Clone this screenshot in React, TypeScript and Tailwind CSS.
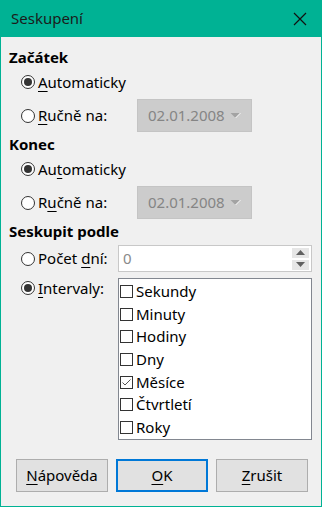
import React from "react";

const U = ({ c }: { c: string }) => (
  <span className="underline underline-offset-[3px] decoration-1">{c}</span>
);

const Radio = ({ checked }: { checked?: boolean }) => (
  <span className="w-[14px] h-[14px] rounded-full border border-[#333333] bg-white flex items-center justify-center shrink-0">
    {checked && <span className="w-[8px] h-[8px] rounded-full bg-[#333333]" />}
  </span>
);

const Check = ({ checked }: { checked?: boolean }) => (
  <span className="w-[13px] h-[13px] border border-[#333333] bg-white flex items-center justify-center shrink-0">
    {checked && (
      <svg width="11" height="11" viewBox="0 0 11 11">
        <path d="M1.5 5.5 L4 8 L9.5 2.5" fill="none" stroke="#555555" strokeWidth="1" />
      </svg>
    )}
  </span>
);

const DateBox = () => (
  <div className="ml-auto mr-[69px] w-[115px] h-[33px] bg-[#cccccc] border border-[#c4c4c4] flex items-center pl-[10px] pr-[10px]">
    <span className="text-[#858585]">02.01.2008</span>
    <svg className="ml-auto" width="11" height="7" viewBox="0 0 11 7">
      <path d="M0.5 1 L10.5 1 L5.5 6 Z" fill="#a3a3a3" />
      <path d="M10.5 1 L5.5 6" stroke="#ffffff" strokeWidth="1" />
    </svg>
  </div>
);

const Button = ({ children, primary }: { children: React.ReactNode; primary?: boolean }) => (
  <div
    className={
      "w-[92px] h-[33px] bg-[#e1e1e1] flex items-center justify-center text-[15px] " +
      (primary ? "border-2 border-[#0078d7]" : "border border-[#adadad]")
    }
  >
    {children}
  </div>
);

export default function App() {
  const items = ["Sekundy", "Minuty", "Hodiny", "Dny", "Měsíce", "Čtvrtletí", "Roky"];
  return (
    <div
      className="w-[322px] h-[507px] flex flex-col border-x border-b border-[#00b294] bg-[#f0f0f0] text-black text-[15px] leading-none"
      style={{ fontFamily: '"Noto Sans", "Open Sans", sans-serif' }}
    >
      <div className="h-[37px] -mx-px bg-[#00b294] flex items-center pl-[11px] pr-[15px] shrink-0">
        <span className="text-[15px] text-[#1b1b1b]">Seskupení</span>
        <svg className="ml-auto" width="14" height="14" viewBox="0 0 14 14">
          <path d="M1 1 L13 13 M13 1 L1 13" stroke="#111111" strokeWidth="1.2" />
        </svg>
      </div>
      <div className="flex flex-col pl-[8px]">
        <div className="h-[24px] mt-[8px] flex items-center font-bold">Začátek</div>
        <div className="h-[24px] mt-[1px] flex items-center pl-[12px] gap-[3px]">
          <Radio checked />
          <span><U c="A" />utomaticky</span>
        </div>
        <div className="h-[33px] mt-[5px] flex items-center pl-[12px] gap-[3px]">
          <Radio />
          <span><U c="R" />učně na:</span>
          <DateBox />
        </div>
        <div className="h-[24px] flex items-center font-bold">Konec</div>
        <div className="h-[24px] mt-[1px] flex items-center pl-[12px] gap-[3px]">
          <Radio checked />
          <span>Au<U c="t" />omaticky</span>
        </div>
        <div className="h-[33px] mt-[5px] flex items-center pl-[12px] gap-[3px]">
          <Radio />
          <span>R<U c="u" />čně na:</span>
          <DateBox />
        </div>
        <div className="h-[24px] flex items-center font-bold">Seskupit podle</div>
        <div className="h-[27px] mt-[2px] flex items-center pl-[12px] gap-[3px]">
          <Radio />
          <span>Počet <U c="d" />ní:</span>
          <div className="ml-auto mr-[9px] w-[194px] h-[27px] bg-white border border-[#c8c8c8] flex items-center pl-[4px]">
            <span className="text-[#8a8a8a]">0</span>
            <div className="ml-auto mr-[2px] flex flex-col gap-[2px]">
              <div className="w-[17px] h-[10px] bg-[#e6e6e6] flex items-center justify-center">
                <svg width="9" height="5" viewBox="0 0 9 5"><path d="M0 5 L9 5 L4.5 0 Z" fill="#606060" /></svg>
              </div>
              <div className="w-[17px] h-[10px] bg-[#e6e6e6] flex items-center justify-center">
                <svg width="9" height="5" viewBox="0 0 9 5"><path d="M0 0 L9 0 L4.5 5 Z" fill="#606060" /></svg>
              </div>
            </div>
          </div>
        </div>
        <div className="mt-[6px] flex items-start pl-[12px] gap-[3px]">
          <div className="h-[20px] flex items-center gap-[3px]">
            <Radio checked />
            <span><U c="I" />ntervaly:</span>
          </div>
          <div className="ml-auto mr-[9px] w-[194px] h-[162px] bg-white border border-[#828790] flex flex-col pl-[1px] pt-[1px]">
            {items.map((it, i) => (
              <div key={it} className="h-[23px] flex items-center gap-[3px]">
                <Check checked={i === 4} />
                <span>{it}</span>
              </div>
            ))}
          </div>
        </div>
        <div className="mt-[19px] flex gap-[8px] pl-[7px]">
          <Button><U c="N" />ápověda</Button>
          <Button primary><U c="O" />K</Button>
          <Button><U c="Z" />rušit</Button>
        </div>
      </div>
    </div>
  );
}
